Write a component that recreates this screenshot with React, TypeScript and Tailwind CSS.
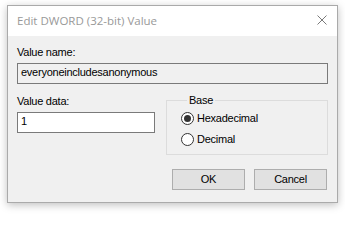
import React from "react";

function Radio({ checked, label }: { checked?: boolean; label: string }) {
  return (
    <div className="flex items-center gap-[3px] h-[13px]">
      <div className="w-[13px] h-[13px] rounded-full border border-[#333333] bg-white flex items-center justify-center">
        {checked && <div className="w-[7px] h-[7px] rounded-full bg-[#333333]" />}
      </div>
      <span>{label}</span>
    </div>
  );
}

export default function App() {
  return (
    <div className="min-h-screen bg-white pt-[5px] pl-[7px] font-['Liberation_Sans',Arial,sans-serif] text-[11px] leading-[13px] tracking-[-0.25px] text-black">
      <div className="w-[331px] h-[198px] border border-[#aaaaaa] bg-[#f0f0f0] shadow-[0_2px_8px_rgba(0,0,0,0.25)] flex flex-col">
        {/* Title bar */}
        <div className="h-[30px] bg-white flex items-center justify-between pl-[9px] pr-[10px]">
          <span className="font-['Open_Sans',sans-serif] text-[11.5px] leading-[16px] tracking-normal text-[#999999]">
            Edit DWORD (32-bit) Value
          </span>
          <svg width="10" height="10" viewBox="0 0 10 10" className="mb-[2px]">
            <path d="M0.5 0.5L9.5 9.5M9.5 0.5L0.5 9.5" stroke="#7a7a7a" strokeWidth="1" />
          </svg>
        </div>

        {/* Body */}
        <div className="flex-1 px-[9px] pt-[10px]">
          <div>Value name:</div>
          <div className="mt-[4px] h-[21px] border border-[#7a7a7a] bg-[#f0f0f0] pl-[3px] pt-[2px]">
            everyoneincludesanonymous
          </div>

          <div className="mt-[10px] flex items-start gap-[11px]">
            <div className="w-[138px] pt-[1px]">
              <div>Value data:</div>
              <div className="mt-[4px] h-[21px] border border-[#7a7a7a] bg-white pl-[3px] pt-[2px]">1</div>
            </div>

            <fieldset className="flex-1 h-[61px] border border-[#dcdcdc] pl-[14px] pt-[5px]">
              <legend className="ml-[6px] px-[2px]">Base</legend>
              <div className="flex flex-col gap-[8px]">
                <Radio checked label="Hexadecimal" />
                <Radio label="Decimal" />
              </div>
            </fieldset>
          </div>

          <div className="mt-[14px] flex justify-end gap-[9px] pr-[1px]">
            <div className="w-[73px] h-[21px] border border-[#adadad] bg-[#e1e1e1] flex items-center justify-center">OK</div>
            <div className="w-[73px] h-[21px] border border-[#adadad] bg-[#e1e1e1] flex items-center justify-center">Cancel</div>
          </div>
        </div>
      </div>
    </div>
  );
}
